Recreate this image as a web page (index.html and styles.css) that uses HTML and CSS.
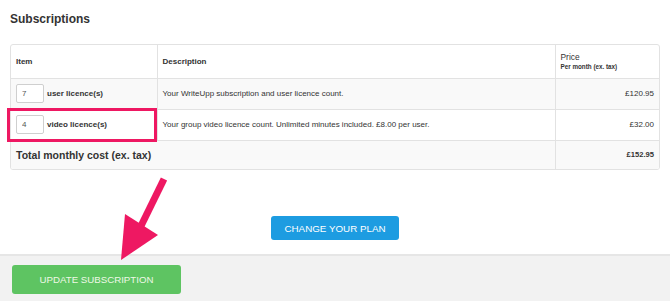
FILE: index.html
```html
<!DOCTYPE html>
<html>
<head>
<meta charset="utf-8">
<link rel="stylesheet" href="styles.css">
</head>
<body>
<div class="screen">
  <div class="main">
    <h2 class="title">Subscriptions</h2>
    <div class="table-wrap">
      <table class="subs">
        <colgroup>
          <col class="c1"><col class="c2"><col class="c3">
        </colgroup>
        <thead>
          <tr class="head">
            <th>Item</th>
            <th>Description</th>
            <th class="price-head"><span class="ph-main">Price</span><span class="ph-sub">Per month (ex. tax)</span></th>
          </tr>
        </thead>
        <tbody>
          <tr class="row odd">
            <td><div class="item"><input class="qty" type="text" value="7"><span class="item-label">user licence(s)</span></div></td>
            <td class="desc">Your WriteUpp subscription and user licence count.</td>
            <td class="price">£120.95</td>
          </tr>
          <tr class="row">
            <td><div class="item"><input class="qty" type="text" value="4"><span class="item-label">video licence(s)</span></div></td>
            <td class="desc">Your group video licence count. Unlimited minutes included. £8.00 per user.</td>
            <td class="price">£32.00</td>
          </tr>
          <tr class="row total odd">
            <td colspan="2" class="total-label">Total monthly cost (ex. tax)</td>
            <td class="price total-price">£152.95</td>
          </tr>
        </tbody>
      </table>
    </div>
    <div class="center-actions">
      <button class="btn btn-blue">CHANGE YOUR PLAN</button>
    </div>
  </div>
  <div class="footer">
    <button class="btn btn-green">UPDATE SUBSCRIPTION</button>
  </div>
  <div class="highlight"></div>
  <svg class="arrow" width="670" height="301" viewBox="0 0 670 301">
    <line x1="164" y1="179" x2="140" y2="228" stroke="#ee1862" stroke-width="7"/>
    <polygon points="125,214 158,235 121,260" fill="#ee1862"/>
  </svg>
</div>
</body>
</html>
```

FILE: styles.css
```css
* { box-sizing: border-box; }
html, body { margin: 0; padding: 0; }
body {
  font-family: "Liberation Sans", Arial, sans-serif;
  color: #333;
  background: #fff;
  width: 670px;
  height: 301px;
  overflow: hidden;
}
.screen {
  position: relative;
  width: 670px;
  height: 301px;
  display: flex;
  flex-direction: column;
}
.main {
  height: 254px;
  padding: 10px 10px 0 10px;
  background: #fff;
}
.title {
  margin: 0;
  padding-top: 2px;
  font-size: 12px;
  font-weight: bold;
  color: #333;
  height: 34px;
}
.table-wrap {
  width: 650px;
  border: 1px solid #e2e2e2;
  border-radius: 3px;
  overflow: hidden;
}
.subs {
  width: 100%;
  border-collapse: collapse;
  table-layout: fixed;
  font-size: 8px;
}
.c1 { width: 146px; }
.c2 { width: 398px; }
.c3 { width: 104px; }
.subs th, .subs td {
  border-left: 1px solid #e2e2e2;
  border-top: 1px solid #e2e2e2;
  padding: 0 5px;
  vertical-align: middle;
}
.subs tr > :first-child { border-left: none; }
.subs thead tr > * { border-top: none; }
.subs th {
  text-align: left;
  font-weight: bold;
  color: #333;
  height: 33px;
}
.ph-main {
  display: block;
  font-weight: normal;
  font-size: 8.4px;
  line-height: 10px;
}
.ph-sub {
  display: block;
  font-weight: bold;
  font-size: 6.3px;
  line-height: 9px;
}
.row td { height: 31px; }
.row.odd td { background: #f9f9f9; }
.item {
  display: flex;
  align-items: center;
  gap: 3px;
}
.qty {
  width: 28px;
  height: 19px;
  border: 1px solid #cfcfcf;
  border-radius: 2px;
  padding: 0 0 0 5px;
  font-family: "Liberation Sans", Arial, sans-serif;
  font-size: 8px;
  color: #555;
  background: #fff;
  margin: 0;
}
.item-label {
  font-weight: bold;
  color: #333;
}
.desc { color: #333; }
.price { text-align: right; color: #333; }
.total td { height: 29px; }
.total-label {
  font-size: 10.5px;
  font-weight: bold;
  padding-bottom: 3px;
}
.total-price {
  font-weight: bold;
  font-size: 7.6px;
}
.center-actions {
  display: flex;
  justify-content: center;
  margin-top: 46px;
}
.btn {
  font-family: "Liberation Sans", Arial, sans-serif;
  border: none;
  border-radius: 3px;
  margin: 0;
}
.btn-blue {
  width: 128px;
  height: 24px;
  background: #1d9ce1;
  color: #fff;
  font-size: 9.8px;
}
.footer {
  flex: 1;
  background: #f2f2f2;
  border-top: 2px solid #e6e6e6;
  padding: 9px 0 0 12px;
}
.btn-green {
  width: 169px;
  height: 29px;
  background: #5ec462;
  color: #eef8e6;
  font-size: 9.7px;
}
.highlight {
  position: absolute;
  left: 7px;
  top: 108px;
  width: 150px;
  height: 34px;
  border: 3px solid #ee1862;
  pointer-events: none;
}
.arrow {
  position: absolute;
  left: 0;
  top: 0;
  pointer-events: none;
}
```
